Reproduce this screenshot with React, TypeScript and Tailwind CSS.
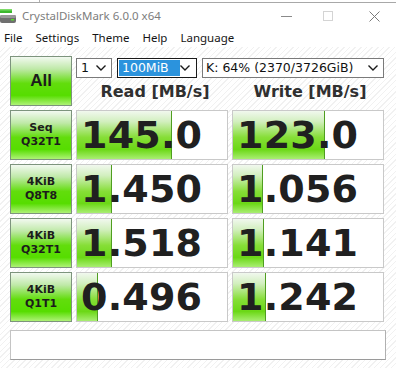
import React from 'react'

const rows = [
  { a: 'Seq', b: 'Q32T1', read: '145.0', write: '123.0', rw: 95, ww: 92 },
  { a: '4KiB', b: 'Q8T8', read: '1.450', write: '1.056', rw: 35, ww: 30 },
  { a: '4KiB', b: 'Q32T1', read: '1.518', write: '1.141', rw: 35, ww: 31 },
  { a: '4KiB', b: 'Q1T1', read: '0.496', write: '1.242', rw: 21, ww: 33 },
]

const dv = { fontFamily: '"DejaVu Sans", Verdana, sans-serif' }
const ui = { fontFamily: '"Noto Sans", "Open Sans", sans-serif' }

function Chevron() {
  return (
    <svg width="10" height="6" viewBox="0 0 10 6" className="shrink-0">
      <polyline points="0.5,0.5 5,5 9.5,0.5" fill="none" stroke="#1a1a1a" strokeWidth="1.4" />
    </svg>
  )
}

function ResultCell({ value, width }: { value: string; width: number }) {
  return (
    <div className="relative h-[50px] bg-white border border-[#c9c9c9] overflow-hidden">
      {/* progress fill */}
      <div
        className="absolute inset-y-0 left-0 border-r border-[#4f9e20] bg-[linear-gradient(to_bottom,#f1f8ee_0%,#d2efbf_22%,#86de37_55%,#6bd816_80%,#a9ee72_100%)]"
        style={{ width }}
      />
      <div
        className="relative h-full flex items-center pl-[4px] text-[38px] font-bold text-[#202020] leading-none tracking-[0.2px]"
        style={dv}
      >
        {value}
      </div>
    </div>
  )
}

function LabelButton({ children, big }: { children: React.ReactNode; big?: boolean }) {
  return (
    <div
      className={`h-[50px] border border-[#7d947d] flex flex-col items-center justify-center font-bold text-[#1c1c1c] bg-[linear-gradient(to_bottom,#f2f9f0_0%,#bfe9a8_25%,#62dd0c_55%,#56dd00_80%,#aef276_100%)] ${big ? 'text-[17px]' : 'text-[11px] leading-[14px]'}`}
      style={big ? { fontFamily: '"Liberation Sans", Arial, sans-serif' } : dv}
    >
      {children}
    </div>
  )
}

export default function App() {
  return (
    <div className="w-[396px] h-[368px] overflow-hidden bg-white flex flex-col">
      {/* edge of the window behind */}
      <div className="h-[3px] border-b border-[#a8a8a8] flex">
        <div className="w-[40px] border-r border-[#b0b0b0]" />
      </div>

      {/* Title bar */}
      <div className="h-[26px] flex items-center">
        <svg width="17" height="16" viewBox="0 0 17 16" className="ml-[0px] mr-[5px] -mt-[1px]">
          <rect x="0" y="1" width="12" height="4" fill="#3cb82e" />
          <rect x="0" y="1" width="12" height="1.5" fill="#7fdc6a" />
          <rect x="0" y="7" width="16" height="8" rx="2" fill="#6f6f6f" />
          <rect x="0" y="7" width="16" height="3" rx="1.5" fill="#9a9a9a" />
          <rect x="11" y="11" width="3" height="1.5" fill="#55e02a" />
        </svg>
        <span className="text-[11.5px] text-[#7d7d7d]" style={ui}>CrystalDiskMark 6.0.0 x64</span>
        <div className="ml-auto flex items-center">
          <div className="w-[11px] h-px bg-[#8a8a8a] mr-[31px]" />
          <div className="w-[10px] h-[10px] border border-[#d4d4d4] mr-[36px]" />
          <svg width="11" height="11" viewBox="0 0 11 11" className="mr-[16px]">
            <path d="M0.5 0.5 L10.5 10.5 M10.5 0.5 L0.5 10.5" stroke="#7a7a7a" strokeWidth="1" />
          </svg>
        </div>
      </div>

      {/* Menu bar */}
      <div className="h-[18px] flex items-center gap-[13px] pl-[4px] text-[11.5px] text-[#151515]" style={ui}>
        <span>File</span>
        <span>Settings</span>
        <span>Theme</span>
        <span>Help</span>
        <span>Language</span>
      </div>

      {/* Main panel */}
      <div className="flex-1 px-[10px] pt-[9px] bg-[repeating-linear-gradient(135deg,#ffffff_0px,#ffffff_3px,#f1f1f1_3px,#f1f1f1_4px)]">
        <div className="grid grid-cols-[62px_152px_152px] gap-[4px]">
          <LabelButton big>All</LabelButton>
          <div className="col-span-2 h-[50px] flex flex-col">
            <div className="mt-[2px] h-[20px] flex gap-[5px] text-[12.5px]" style={dv}>
              <div className="w-[36px] bg-white border border-[#7a7a7a] flex items-center justify-between pl-[4px] pr-[5px] text-[#111]">
                <span>1</span>
                <Chevron />
              </div>
              <div className="w-[80px] bg-white border border-[#1a1a1a] flex items-center justify-between p-[1px] pr-[6px]">
                <span className="h-full w-[61px] bg-[#2b93dd] text-white flex items-center pl-[3px]">100MiB</span>
                <Chevron />
              </div>
              <div className="flex-1 bg-white border border-[#7a7a7a] flex items-center justify-between pl-[3px] pr-[5px] text-[#111]">
                <span>K: 64% (2370/3726GiB)</span>
                <Chevron />
              </div>
            </div>
            <div className="flex-1 grid grid-cols-2 gap-[4px] items-center text-[16px] font-bold text-[#303030]" style={dv}>
              <div className="text-center pl-[6px]">Read [MB/s]</div>
              <div className="text-center pl-[4px]">Write [MB/s]</div>
            </div>
          </div>

          {rows.map((r, i) => (
            <React.Fragment key={i}>
              <LabelButton>
                <span>{r.a}</span>
                <span>{r.b}</span>
              </LabelButton>
              <ResultCell value={r.read} width={r.rw} />
              <ResultCell value={r.write} width={r.ww} />
            </React.Fragment>
          ))}
        </div>

        {/* Comment box */}
        <div className="mt-[8px] h-[30px] bg-white border border-[#c4c4c4] border-b-[#9a9a9a] border-r-[#b0b0b0]" />
      </div>
    </div>
  )
}
